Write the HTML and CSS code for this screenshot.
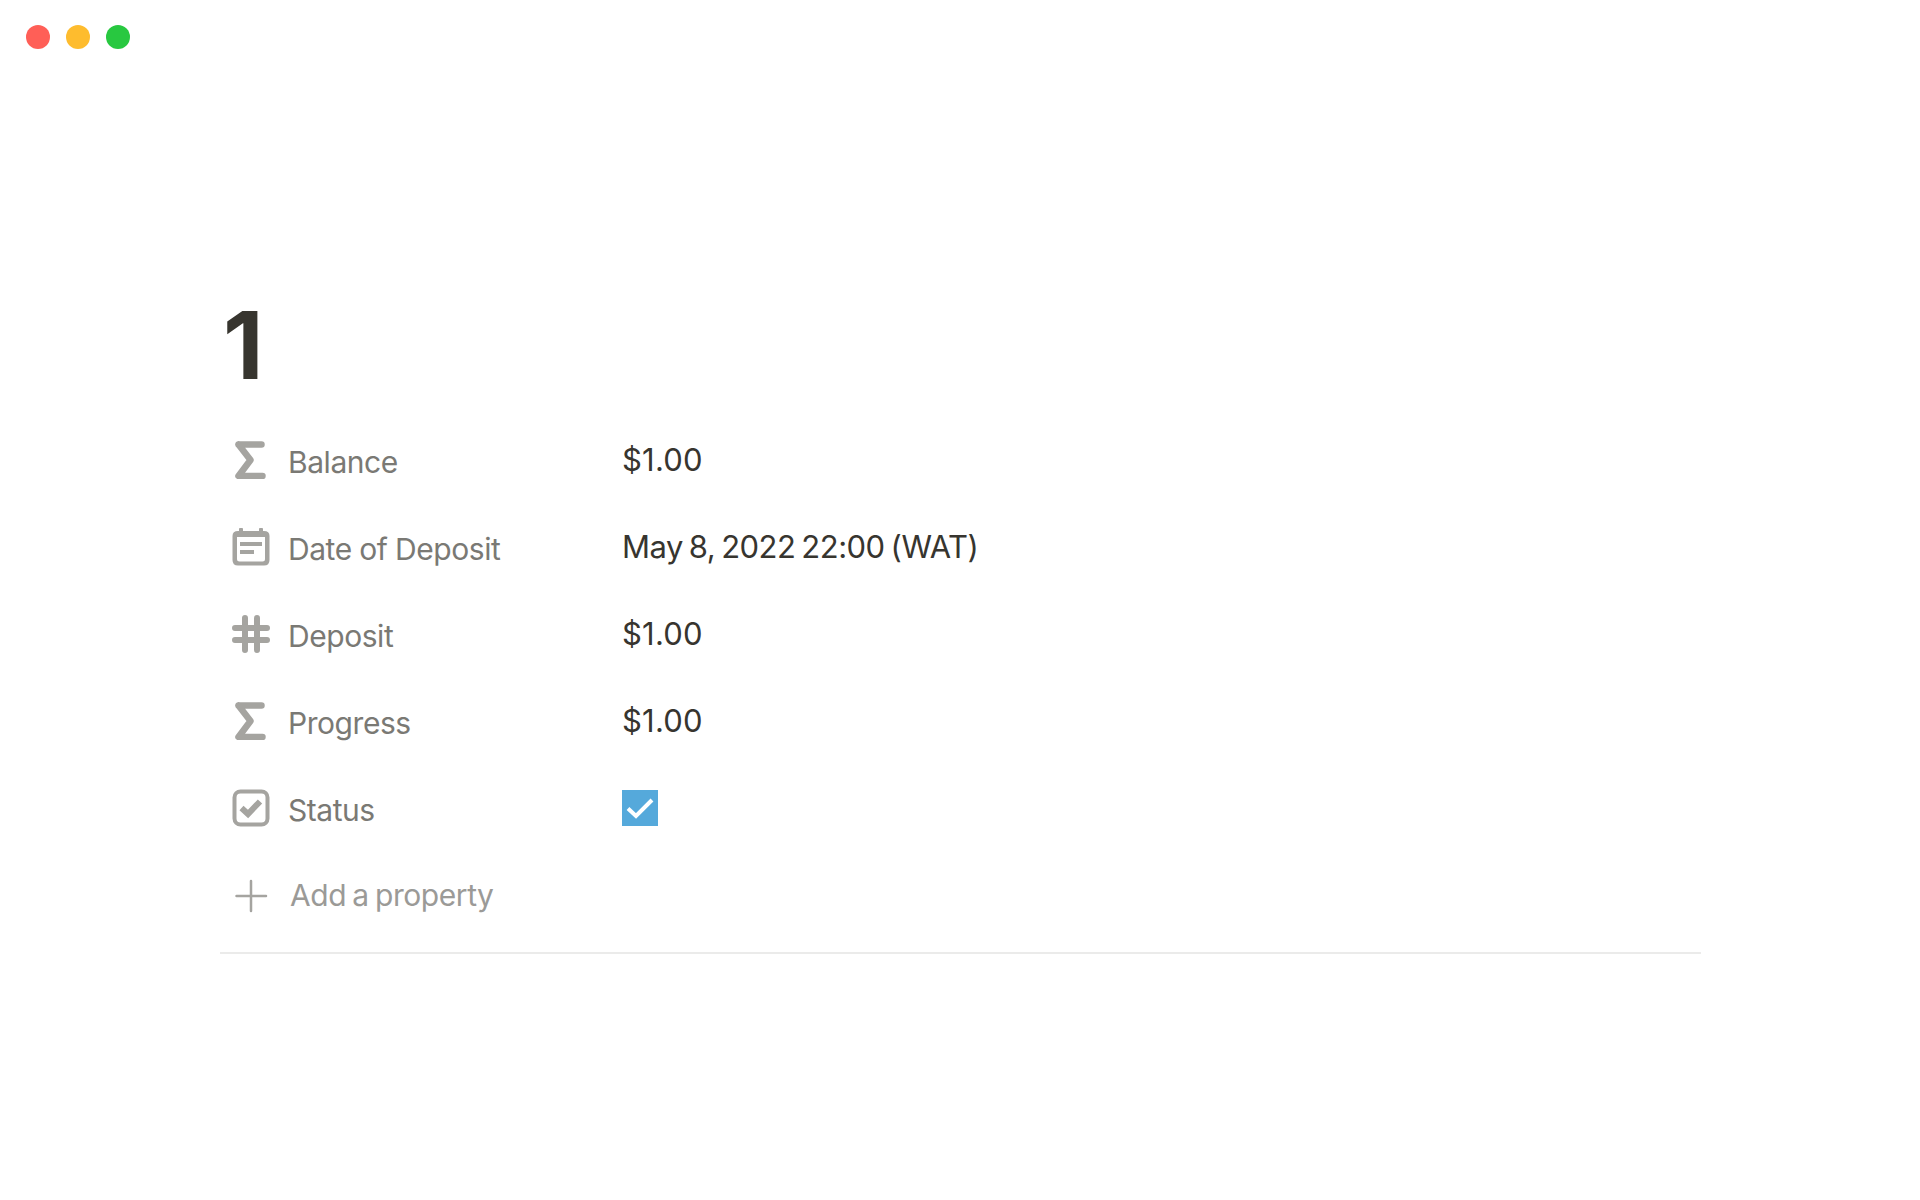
FILE: index.html
```html
<!DOCTYPE html>
<html lang="en">
<head>
<meta charset="utf-8">
<title>1</title>
<link rel="stylesheet" href="styles.css">
</head>
<body>
<div class="traffic">
  <span class="light red"></span>
  <span class="light yellow"></span>
  <span class="light green"></span>
</div>
<main class="page">
  <h1 class="title">1</h1>
  <div class="props">
    <div class="row">
      <div class="name">
        <svg class="icon" viewBox="0 0 38 38"><path class="sigma" d="M6.500 3.500H29.500M6.500 3.500L18.500 19L6.500 35H30.500"/></svg>
        <span class="label">Balance</span>
      </div>
      <div class="value">$1.00</div>
    </div>
    <div class="row">
      <div class="name">
        <svg class="icon" viewBox="0 0 38 38"><path class="fill" fill-rule="evenodd" d="M6 3H7V0.8Q7 0 8 0H10Q11 0 11 0.8V3H27V0.8Q27 0 28 0H30Q31 0 31 0.8V3H32Q37.500 3 37.500 8V32Q37.500 37.500 32 37.500H6Q0.500 37.500 0.500 32V8Q0.500 3 6 3ZM5 9V31Q5 33.500 7.500 33.500H30.500Q33 33.500 33 31V9Z"/><path class="fill" d="M8 14H30V18H8ZM8 22H22V26H8Z"/></svg>
        <span class="label">Date of Deposit</span>
      </div>
      <div class="value date">May 8, 2022 22:00 (WAT)</div>
    </div>
    <div class="row">
      <div class="name">
        <svg class="icon" viewBox="0 0 38 38"><path class="hash" d="M13 3V35M25 3V35M3 13H35M3 25H35"/></svg>
        <span class="label">Deposit</span>
      </div>
      <div class="value">$1.00</div>
    </div>
    <div class="row">
      <div class="name">
        <svg class="icon" viewBox="0 0 38 38"><path class="sigma" d="M6.500 3.500H29.500M6.500 3.500L18.500 19L6.500 35H30.500"/></svg>
        <span class="label">Progress</span>
      </div>
      <div class="value">$1.00</div>
    </div>
    <div class="row">
      <div class="name">
        <svg class="icon" viewBox="0 0 38 38"><rect class="outline" x="2.500" y="2.500" width="33" height="33" rx="6"/><path class="tick" d="M9.500 19L16 25L28 12.500"/></svg>
        <span class="label">Status</span>
      </div>
      <div class="value check">
        <span class="checkbox"><svg class="checkmark" viewBox="0 0 36 36"><path d="M6 18.500L14 26L30 10"/></svg></span>
      </div>
    </div>
    <div class="row add">
      <div class="name">
        <svg class="icon" viewBox="0 0 38 38"><path class="thin" d="M19 5V35M4.500 20H34"/></svg>
        <span class="label">Add a property</span>
      </div>
    </div>
  </div>
  <hr class="rule">
</main>
</body>
</html>
```
FILE: styles.css
```css
html, body { margin: 0; padding: 0; background: #fff; }
body { width: 1920px; height: 1200px; overflow: hidden; font-family: Inter, "Liberation Sans", sans-serif; }

.traffic { display: flex; gap: 16px; padding: 25px 0 0 26px; height: 24px; }
.light { width: 24px; height: 24px; border-radius: 50%; }
.red { background: #ff5f57; }
.yellow { background: #febc2e; }
.green { background: #28c840; }

.page { margin: 0 0 0 220px; width: 1481px; }
.title {
  margin: 240px 0 0; padding: 0 0 0 3px;
  height: 127px; line-height: 112px;
  font-size: 94px; font-weight: 700; color: #37352f;
}

.row { display: flex; align-items: center; height: 87px; }
.name { display: flex; align-items: center; gap: 18px; width: 402px; padding-left: 12px; box-sizing: border-box; }
.icon { width: 38px; height: 38px; flex: none; }
.label { font-size: 30px; line-height: 40px; color: #7a7974; position: relative; top: 2px; letter-spacing: -0.45px; word-spacing: -0.4px; }
.value { font-size: 31px; line-height: 40px; color: #37352f; position: relative; letter-spacing: 0.2px; }
.date { letter-spacing: -0.5px; word-spacing: -2.3px; }
.check { top: 0; }

.sigma { fill: none; stroke: #a5a4a0; stroke-width: 6.5; stroke-linecap: round; stroke-linejoin: round; }
.hash { fill: none; stroke: #a5a4a0; stroke-width: 6; stroke-linecap: round; }
.fill { fill: #a5a4a0; }
.outline { fill: none; stroke: #a5a4a0; stroke-width: 4; }
.tick { fill: none; stroke: #a5a4a0; stroke-width: 6; }
.thin { fill: none; stroke: #a5a4a0; stroke-width: 2.5; stroke-linecap: round; }

.checkbox { display: block; width: 36px; height: 36px; background: #55a9db; }
.checkmark { display: block; width: 36px; height: 36px; fill: none; stroke: #fff; stroke-width: 4; }

.add .label { color: #9b9a97; margin-left: 2px; top: 0; word-spacing: -1.7px; }

.rule { margin: 14px 0 0; border: 0; height: 2px; background: #ebebea; }
```
